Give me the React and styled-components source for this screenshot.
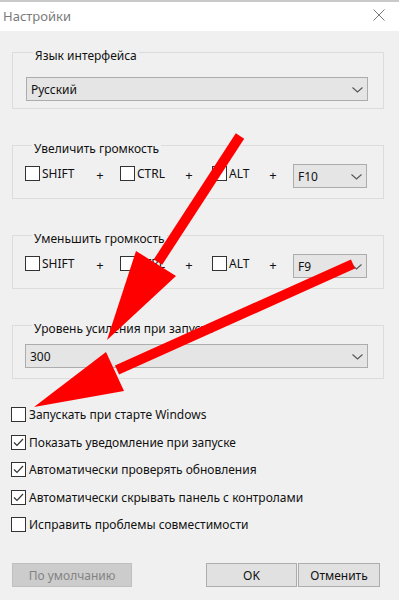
import React from 'react';
import styled, { createGlobalStyle } from 'styled-components';

const GlobalStyle = createGlobalStyle`
  html, body {
    margin: 0;
    padding: 0;
    background: #f0f0f0;
  }
  body {
    font-family: "Noto Sans", "Segoe UI", Arial, sans-serif;
    font-size: 12px;
    color: #000;
  }
`;

const Window = styled.div`
  position: relative;
  width: 399px;
  height: 600px;
  overflow: hidden;
  background: #f0f0f0;
`;

const TopStrip = styled.div`
  height: 2px;
  background: #c9c9c9;
`;

const TitleBar = styled.div`
  height: 29px;
  background: #fff;
  display: flex;
  align-items: center;
  justify-content: space-between;
  padding: 0 14px 0 3px;
`;

const Title = styled.div`
  font-size: 13px;
  color: #7a7a7a;
  margin-top: -1px;
`;

const CloseIcon = styled.svg`
  width: 12px;
  height: 12px;
  margin-top: -3px;
`;

const Body = styled.div`
  padding: 10px 15px 0 12px;
`;

const Group = styled.fieldset`
  margin: ${(p) => (p.$first ? '0' : '25px')} 0 0 0;
  padding: ${(p) => (p.$first ? '14px 15px 7px 13px' : '8px 15px 10px 12px')};
  border: 1px solid #dcdcdc;
  min-width: 0;
`;

const Legend = styled.legend`
  padding: 8px 2px 0 2px;
  margin-left: 7px;
  line-height: 14px;
  font-size: 12px;
  color: #111;
`;

const Select = styled.div`
  height: 24px;
  box-sizing: border-box;
  background: #e5e5e5;
  border: 1px solid #acacac;
  display: flex;
  align-items: center;
  justify-content: space-between;
  padding: 0 4px 0 4px;
  font-size: 12px;
  color: #111;
`;

const Chevron = () => (
  <svg width="11" height="6" viewBox="0 0 11 6" style={{ marginTop: 1 }}>
    <path d="M0.5 0.5 L5.5 5 L10.5 0.5" fill="none" stroke="#555" strokeWidth="1.1" />
  </svg>
);

const KeyRow = styled.div`
  display: grid;
  grid-template-columns: 55px 40px 46px 46px 41px 40px 74px;
  align-items: start;
  height: 24px;
`;

const Plus = styled.span`
  text-align: center;
  font-size: 13px;
  line-height: 15px;
  margin-top: 4px;
  color: #111;
`;

const CheckItem = styled.label`
  display: flex;
  align-items: center;
  height: 15px;
  margin-top: ${(p) => (p.$top ? p.$top : 0)}px;
  gap: ${(p) => (p.$gap ? p.$gap : 3)}px;
  white-space: nowrap;
  color: #111;
  font-size: 12px;
`;

const Box = styled.span`
  width: 15px;
  height: 15px;
  box-sizing: border-box;
  border: 1px solid #333;
  background: #fff;
  display: inline-flex;
  align-items: center;
  justify-content: center;
  flex: none;
`;

const CheckList = styled.div`
  margin-top: 28px;
  margin-left: -1px;
  display: flex;
  flex-direction: column;
  gap: 12.5px;
`;

const Buttons = styled.div`
  display: flex;
  align-items: center;
  margin-top: 31px;
  padding-right: 4px;
`;

const Button = styled.div`
  height: 24px;
  box-sizing: border-box;
  width: ${(p) => p.$w}px;
  display: flex;
  align-items: center;
  justify-content: center;
  font-size: 12px;
  background: ${(p) => (p.$disabled ? '#cccccc' : '#e1e1e1')};
  border: 1px solid ${(p) => (p.$disabled ? '#bfbfbf' : '#adadad')};
  color: ${(p) => (p.$disabled ? '#838383' : '#111')};
  margin-left: ${(p) => (p.$ml ? p.$ml : 0)}px;
`;

const Spacer = styled.div`
  flex: 1;
`;

const Overlay = styled.svg`
  position: absolute;
  left: 0;
  top: 0;
  width: 399px;
  height: 600px;
  pointer-events: none;
`;

const Check = ({ checked, label, gap, top }) => (
  <CheckItem $gap={gap} $top={top}>
    <Box>
      {checked && (
        <svg width="11" height="9" viewBox="0 0 11 9">
          <path d="M1 4.5 L4 7.5 L10 1" fill="none" stroke="#333" strokeWidth="1.2" />
        </svg>
      )}
    </Box>
    {label}
  </CheckItem>
);

const HotkeyGroup = ({ title, fkey }) => (
  <Group>
    <Legend>{title}</Legend>
    <KeyRow>
      <Check label="SHIFT" gap={2} top={2} />
      <Plus>+</Plus>
      <Check label="CTRL" gap={2} top={2} />
      <Plus>+</Plus>
      <Check label="ALT" gap={2} top={2} />
      <Plus>+</Plus>
      <Select>
        <span>{fkey}</span>
        <Chevron />
      </Select>
    </KeyRow>
  </Group>
);

const options = [
  { label: 'Запускать при старте Windows', checked: false },
  { label: 'Показать уведомление при запуске', checked: true },
  { label: 'Автоматически проверять обновления', checked: true },
  { label: 'Автоматически скрывать панель с контролами', checked: true },
  { label: 'Исправить проблемы совместимости', checked: false },
];

export default function App() {
  return (
    <>
      <GlobalStyle />
      <Window>
        <TopStrip />
        <TitleBar>
          <Title>Настройки</Title>
          <CloseIcon viewBox="0 0 12 12">
            <path d="M0.5 0.5 L11.5 11.5 M11.5 0.5 L0.5 11.5" stroke="#777" strokeWidth="1" />
          </CloseIcon>
        </TitleBar>
        <Body>
          <Group $first>
            <Legend>Язык интерфейса</Legend>
            <Select>
              <span>Русский</span>
              <Chevron />
            </Select>
          </Group>
          <HotkeyGroup title="Увеличить громкость" fkey="F10" />
          <HotkeyGroup title="Уменьшить громкость" fkey="F9" />
          <Group>
            <Legend>Уровень усиления при запуске</Legend>
            <Select>
              <span>300</span>
              <Chevron />
            </Select>
          </Group>
          <CheckList>
            {options.map((o) => (
              <Check key={o.label} label={o.label} checked={o.checked} />
            ))}
          </CheckList>
          <Buttons>
            <Button $w={120} $disabled>По умолчанию</Button>
            <Spacer />
            <Button $w={91}>OK</Button>
            <Button $w={82} $ml={1}>Отменить</Button>
          </Buttons>
        </Body>
        <Overlay viewBox="0 0 399 600">
          <line x1="240" y1="136" x2="158" y2="262" stroke="#ff0000" strokeWidth="10" />
          <polygon points="107,340 136,251 176,276" fill="#ff0000" />
          <line x1="353" y1="264" x2="117" y2="370" stroke="#ff0000" strokeWidth="10" />
          <polygon points="34,407 106,352 124,391" fill="#ff0000" />
        </Overlay>
      </Window>
    </>
  );
}
